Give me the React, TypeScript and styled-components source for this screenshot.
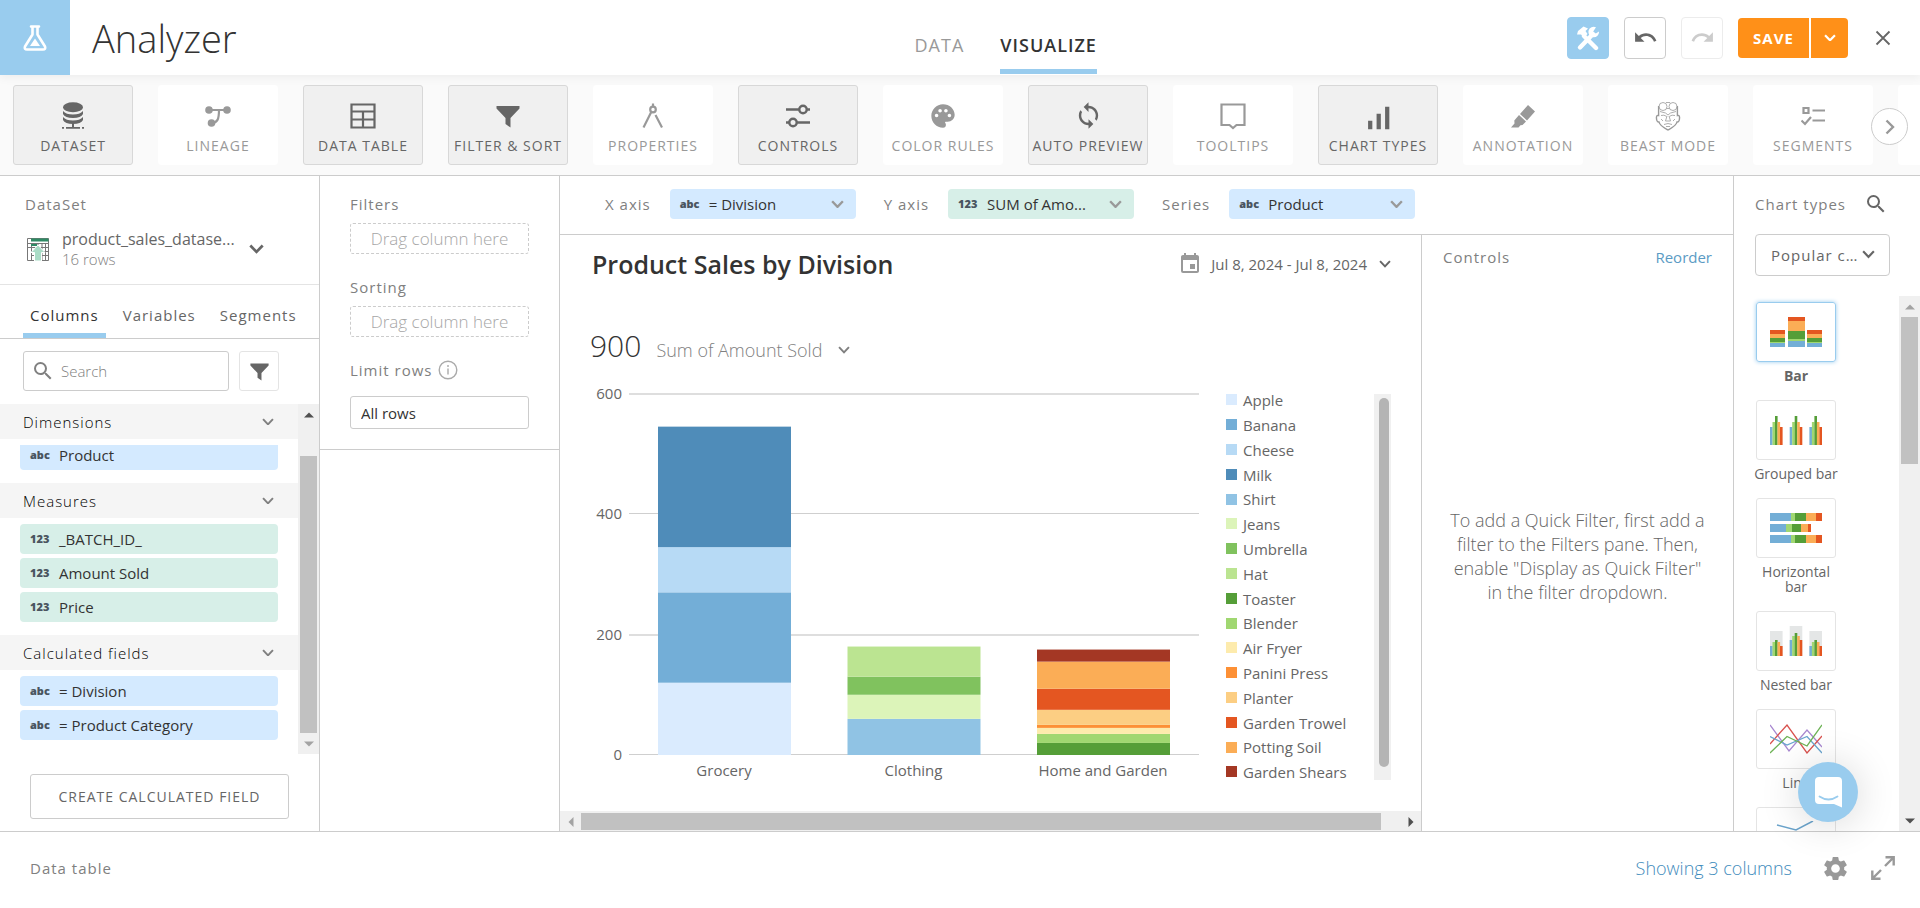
import React from "react";
import styled, { createGlobalStyle, css } from "styled-components";
import {
  MdUndo, MdRedo, MdPalette, MdSync, MdSignalCellularAlt, MdSettings, MdSearch, MdEvent,
} from "react-icons/md";

const c = {
  blue: "#99ccee",
  link: "#5b9bc4",
  orange: "#ff9018",
  line: "#cccccc",
  soft: "#e4e4e4",
  ink: "#333333",
  mid: "#666666",
  label: "#808080",
  pale: "#999999",
  thumb: "#c1c1c1",
  pillBlue: "#d4eaff",
  pillGreen: "#d7efe8",
};

const GlobalStyle = createGlobalStyle`
  *, *::before, *::after { box-sizing: border-box; }
  body { margin: 0; background: #fff; color: ${c.ink}; font-family: "Open Sans", "Noto Sans", sans-serif; font-size: 15px; line-height: 20px; overflow: hidden; }
  button, input, select { font-family: inherit; font-size: inherit; line-height: inherit; color: inherit; }
  button { background: none; border: 0; padding: 0; cursor: pointer; }
  h1, h2, h3, p, ul { margin: 0; padding: 0; font-weight: 400; }
  ul { list-style: none; }
  a { text-decoration: none; }
  svg { display: block; flex: none; }
`;

/* ---------- shell ---------- */
const Page = styled.div`
  height: 100vh;
  display: flex;
  flex-direction: column;
`;

const Header = styled.header`
  position: relative;
  z-index: 1;
  flex: none;
  height: 75px;
  display: grid;
  grid-template-columns: 10fr auto 9fr;
  background: #fff;
  box-shadow: 0 2px 10px rgba(0, 0, 0, 0.06);
`;

const Brand = styled.div`
  display: flex;
  align-items: center;
  gap: 22px;
`;

const BrandMark = styled.div`
  width: 70px;
  height: 75px;
  display: grid;
  place-items: center;
  background: ${c.blue};
`;

const AppTitle = styled.h1`
  font-size: 38px;
  line-height: 48px;
  font-weight: 300;
`;

const MainTabs = styled.nav`
  display: flex;
  gap: 36px;
  padding-bottom: 1px;
`;

const MainTab = styled.button<{ $active?: boolean }>`
  padding-top: 20px;
  font-size: 18px;
  letter-spacing: 1px;
  font-weight: ${(p) => (p.$active ? 600 : 400)};
  color: ${(p) => (p.$active ? c.ink : c.pale)};
  border-bottom: 5px solid ${(p) => (p.$active ? c.blue : "transparent")};
`;

const Actions = styled.div`
  display: flex;
  align-items: center;
  justify-content: flex-end;
  gap: 15px;
  padding-right: 25px;
`;

const SquareButton = styled.button<{ $tone: "filled" | "plain" | "faint" }>`
  width: 42px;
  height: 42px;
  display: grid;
  place-items: center;
  border-radius: 4px;
  border: 1px solid ${(p) => (p.$tone === "filled" ? c.blue : p.$tone === "plain" ? c.line : "#ececec")};
  background: ${(p) => (p.$tone === "filled" ? c.blue : "#fff")};
  color: ${(p) => (p.$tone === "filled" ? "#fff" : p.$tone === "plain" ? c.mid : c.line)};
`;

const SaveGroup = styled.div`
  display: flex;
  gap: 2px;
  height: 40px;
  border-radius: 4px;
  overflow: hidden;
  color: #fff;
  button { background: ${c.orange}; display: grid; place-items: center; }
`;

const SaveButton = styled.button`
  width: 71px;
  font-size: 15px;
  font-weight: 700;
  letter-spacing: 1px;
`;

const SaveMore = styled.button`
  width: 37px;
`;

const CloseButton = styled.button`
  margin-left: 12px;
  padding-right: 4px;
  color: ${c.mid};
`;

/* ---------- toolbar ---------- */
const Toolbar = styled.div`
  position: relative;
  flex: none;
  height: 101px;
  padding: 10px 0 0 13px;
  border-bottom: 1px solid ${c.line};
  background: #fafafa;
  overflow: hidden;
`;

const ToolRow = styled.div`
  display: flex;
  gap: 25px;
`;

const Tool = styled.button<{ $on?: boolean }>`
  flex: none;
  width: 120px;
  height: 80px;
  padding-top: 6px;
  display: flex;
  flex-direction: column;
  align-items: center;
  justify-content: center;
  gap: 5px;
  white-space: nowrap;
  font-size: 14px;
  letter-spacing: 1px;
  border-radius: 3px;
  border: 1px solid ${(p) => (p.$on ? "#d8d8d8" : "#fff")};
  background: ${(p) => (p.$on ? "#f0f0f0" : "#fff")};
  color: ${(p) => (p.$on ? c.mid : c.pale)};
`;

const ToolIcon = styled.span`
  height: 30px;
  display: grid;
  place-items: center;
`;

const NextTools = styled.button`
  position: absolute;
  right: 12px;
  top: 33px;
  width: 37px;
  height: 37px;
  display: grid;
  place-items: center;
  border: 1px solid ${c.line};
  border-radius: 50%;
  background: #fff;
  color: ${c.pale};
`;

/* ---------- workspace ---------- */
const Workspace = styled.div`
  flex: 1;
  min-height: 0;
  display: grid;
  grid-template-columns: 320px 240px minmax(0, 1fr) 187px;
  grid-template-rows: minmax(0, 1fr);
  border-bottom: 1px solid ${c.line};
`;

const panel = css`
  display: flex;
  flex-direction: column;
  min-width: 0;
  min-height: 0;
  overflow: hidden;
`;

const SidePanel = styled.aside`
  ${panel}
  border-right: 1px solid ${c.line};
`;

const PanelLabel = styled.h2`
  font-size: 15px;
  line-height: 20px;
  letter-spacing: 1px;
  color: ${c.label};
`;

const DatasetBox = styled.div`
  flex: none;
  padding: 18px 25px 12px;
  height: 109px;
  border-bottom: 1px solid ${c.soft};
`;

const DatasetRow = styled.button`
  width: 100%;
  margin-top: 15px;
  padding-left: 2px;
  display: flex;
  align-items: center;
  gap: 13px;
  text-align: left;
  color: ${c.mid};
`;

const DatasetText = styled.span`
  width: 174px;
  display: flex;
  flex-direction: column;
`;

const DatasetName = styled.span`
  font-size: 16px;
  white-space: nowrap;
`;

const DatasetRows = styled.span`
  font-weight: 300;
  color: ${c.label};
`;

const SubTabs = styled.div`
  flex: none;
  height: 54px;
  padding: 0 15px 0 23px;
  display: flex;
  gap: 10px;
  border-bottom: 1px solid ${c.line};
`;

const SubTab = styled.button<{ $active?: boolean }>`
  padding: 11px 7px 0;
  letter-spacing: 1px;
  color: ${(p) => (p.$active ? c.ink : c.mid)};
  border-bottom: 5px solid ${(p) => (p.$active ? c.blue : "transparent")};
`;

const SearchRow = styled.div`
  flex: none;
  display: flex;
  gap: 10px;
  padding: 12px 40px 13px 23px;
`;

const SearchBox = styled.label`
  flex: 1;
  min-width: 0;
  height: 40px;
  display: flex;
  align-items: center;
  gap: 6px;
  padding-left: 7px;
  border: 1px solid ${c.line};
  border-radius: 3px;
  color: ${c.label};
  input {
    flex: 1;
    min-width: 0;
    border: 0;
    outline: 0;
    padding: 0;
    background: none;
  }
  input::placeholder { color: ${c.label}; font-weight: 300; opacity: 1; }
`;

const FilterButton = styled.button`
  width: 40px;
  height: 40px;
  display: grid;
  place-items: center;
  border: 1px solid ${c.soft};
  border-radius: 3px;
  color: ${c.mid};
`;

const FieldArea = styled.div`
  height: 350px;
  flex: none;
  display: flex;
`;

const FieldList = styled.div`
  flex: 1;
  min-width: 0;
  overflow: hidden;
`;

const GroupHead = styled.button`
  width: 100%;
  height: 35px;
  padding: 0 24px 0 23px;
  display: flex;
  align-items: center;
  justify-content: space-between;
  font-weight: 300;
  letter-spacing: 1px;
  color: #000;
  background: #f5f5f5;
  > svg { color: ${c.label}; }
`;

const FieldGroup = styled.ul<{ $cut?: boolean }>`
  margin: 6px 20px 13px;
  display: flex;
  flex-direction: column;
  gap: 4px;
  ${(p) => p.$cut && css`
    height: 25px;
    justify-content: flex-end;
    overflow: hidden;
  `}
`;

const Field = styled.li<{ $kind: Kind }>`
  flex: none;
  height: 30px;
  display: flex;
  align-items: center;
  gap: 8px;
  padding: 0 10px;
  border-radius: 4px;
  background: ${(p) => (p.$kind === "abc" ? c.pillBlue : c.pillGreen)};
`;

const KindTag = styled.span`
  width: 21px;
  font-size: 11px;
  line-height: 16px;
  font-weight: 800;
  color: #4a5560;
`;

const CreateButton = styled.button`
  flex: none;
  height: 45px;
  margin: 20px 30px 0;
  border: 1px solid ${c.line};
  border-radius: 3px;
  font-size: 14px;
  letter-spacing: 1px;
  color: ${c.mid};
`;

/* ---------- scrollbars ---------- */
const Track = styled.div<{ $across?: boolean }>`
  flex: none;
  display: flex;
  flex-direction: ${(p) => (p.$across ? "row" : "column")};
  align-items: stretch;
  ${(p) => (p.$across ? "height: 20px; padding: 2px 0 1px;" : "width: 21px; padding: 0 2px;")}
  background: #f0f0f0;
`;

const TrackEnd = styled.span`
  flex: 0 0 21px;
  display: grid;
  place-items: center;
`;

const Thumb = styled.span<{ $grow: number }>`
  flex: ${(p) => p.$grow} 1 0;
  background: ${c.thumb};
`;

const Space = styled.span<{ $grow: number }>`
  flex: ${(p) => p.$grow} 1 0;
`;

/* ---------- filters ---------- */
const FilterBox = styled.div`
  height: 274px;
  padding: 18px 30px 0 30px;
  border-bottom: 1px solid ${c.line};
`;

const DropZone = styled.div`
  height: 31px;
  margin: 9px 0 23px;
  display: grid;
  place-items: center;
  border: 1px dashed ${c.line};
  border-radius: 3px;
  font-size: 17px;
  font-weight: 300;
  color: #a6a6a6;
`;

const LimitLabel = styled.label`
  display: flex;
  align-items: center;
  gap: 6px;
  font-size: 15px;
  letter-spacing: 1px;
  color: ${c.label};
`;

const LimitInput = styled.input`
  width: 100%;
  height: 33px;
  margin-top: 16px;
  padding: 0 10px;
  border: 1px solid ${c.line};
  border-radius: 3px;
`;

/* ---------- chart column ---------- */
const Center = styled.main`
  ${panel}
`;

const AxisBar = styled.div`
  flex: none;
  height: 59px;
  padding: 0 45px 2px;
  display: flex;
  align-items: center;
  gap: 28px;
  border-bottom: 1px solid ${c.line};
`;

const AxisGroup = styled.div`
  display: flex;
  align-items: center;
  gap: 19px;
`;

const AxisPill = styled.button<{ $kind: Kind }>`
  width: 186px;
  height: 30px;
  display: flex;
  align-items: center;
  gap: 8px;
  padding: 0 12px 0 10px;
  text-align: left;
  border-radius: 4px;
  background: ${(p) => (p.$kind === "abc" ? c.pillBlue : c.pillGreen)};
  > svg { margin-left: auto; color: ${c.pale}; }
`;

const Split = styled.div`
  flex: 1;
  min-height: 0;
  display: grid;
  grid-template-columns: minmax(0, 1fr) 312px;
`;

const ChartPane = styled.section`
  ${panel}
`;

const ChartHead = styled.div`
  display: flex;
  align-items: center;
  justify-content: space-between;
  padding: 13px 30px 0 32px;
`;

const ChartTitle = styled.h2`
  font-size: 25px;
  line-height: 32px;
  font-weight: 600;
`;

const DateButton = styled.button`
  display: flex;
  align-items: center;
  gap: 9px;
  color: ${c.mid};
  > svg:first-child { color: ${c.pale}; }
  > svg:last-child { margin-left: 3px; }
`;

const Summary = styled.div`
  display: flex;
  align-items: baseline;
  gap: 15px;
  padding: 46px 0 0 30px;
`;

const SummaryValue = styled.span`
  font-size: 30px;
  line-height: 40px;
  font-weight: 300;
`;

const SummaryName = styled.button`
  display: flex;
  align-items: center;
  gap: 16px;
  font-size: 18px;
  font-weight: 300;
  color: ${c.label};
`;

const ChartBody = styled.div`
  flex: 1;
  min-height: 0;
  display: flex;
  padding: 17px 30px 0 30px;
`;

const ChartSvg = styled.svg`
  width: 609px;
  height: 410px;
  text { font-size: 15px; fill: ${c.mid}; }
`;

const Legend = styled.ul`
  flex: 1;
  padding: 4px 0 0 27px;
`;

const LegendItem = styled.li`
  display: flex;
  align-items: center;
  gap: 6px;
  height: 25px;
  color: ${c.mid};
  &:nth-child(5n) { height: 24px; }
`;

const Swatch = styled.span<{ $fill: string }>`
  width: 11px;
  height: 11px;
  background: ${(p) => p.$fill};
`;

const LegendTrack = styled.div`
  width: 17px;
  height: 386px;
  margin-top: 11px;
  padding: 4px 2px 13px 5px;
  background: #f0f0f0;
  display: flex;
  span { flex: 1; border-radius: 5px; background: #b4b4b4; }
`;

const ControlsPane = styled.section`
  ${panel}
  border-left: 1px solid ${c.line};
`;

const ControlsHead = styled.div`
  display: flex;
  justify-content: space-between;
  padding: 12px 21px 0;
  a { color: ${c.link}; }
`;

const Hint = styled.p`
  flex: 1;
  display: flex;
  align-items: center;
  padding: 14px 25px 0;
  text-align: center;
  font-size: 18px;
  line-height: 24px;
  font-weight: 300;
  color: ${c.mid};
`;

/* ---------- chart types ---------- */
const TypesPanel = styled.aside`
  ${panel}
  border-left: 1px solid ${c.line};
`;

const TypesHead = styled.div`
  display: flex;
  align-items: center;
  justify-content: space-between;
  padding: 16px 32px 0 21px;
`;

const TypeSelect = styled.div`
  position: relative;
  margin: 18px 30px 20px 21px;
  height: 42px;
  color: ${c.mid};
  select {
    appearance: none;
    width: 100%;
    height: 42px;
    padding: 0 24px 0 15px;
    border: 1px solid ${c.line};
    border-radius: 4px;
    background: #fff;
    letter-spacing: 1px;
    text-overflow: ellipsis;
    color: ${c.mid};
  }
  svg { position: absolute; right: 15px; top: 16px; pointer-events: none; }
`;

const TypesArea = styled.div`
  flex: 1;
  min-height: 0;
  display: flex;
`;

const TypeList = styled.ul`
  flex: 1;
  overflow: hidden;
  padding: 6px 0 0 17px;
`;

const TypeItem = styled.li`
  width: 90px;
  margin-bottom: 17px;
`;

const TypeButton = styled.button<{ $on?: boolean }>`
  width: 100%;
  display: flex;
  flex-direction: column;
  align-items: center;
  gap: 6px;
  font-size: 14px;
  line-height: 15px;
  font-weight: ${(p) => (p.$on ? 700 : 400)};
  color: ${c.mid};
`;

const TypeThumb = styled.span<{ $on?: boolean }>`
  width: 80px;
  height: 60px;
  display: grid;
  place-items: center;
  border-radius: 3px;
  border: 1px solid ${(p) => (p.$on ? c.blue : c.soft)};
  ${(p) => p.$on && "box-shadow: 0 0 4px #99ccee;"}
`;

/* ---------- footer ---------- */
const Footer = styled.footer`
  flex: none;
  height: 76px;
  padding: 0 25px 4px 30px;
  display: flex;
  align-items: center;
  gap: 21px;
`;

const FooterLink = styled.a`
  margin-left: auto;
  margin-right: 8px;
  font-size: 18px;
  font-weight: 300;
  color: #3f8cbc;
`;

const IconButton = styled.button<{ $dark?: boolean }>`
  color: ${(p) => (p.$dark ? c.mid : c.pale)};
`;

const ChatButton = styled.button`
  position: fixed;
  right: 62px;
  bottom: 86px;
  z-index: 2;
  width: 60px;
  height: 60px;
  display: grid;
  place-items: center;
  border-radius: 50%;
  background: ${c.blue};
  box-shadow: 0 2px 40px rgba(0, 0, 0, 0.16);
`;

/* ---------- icons ---------- */
const Chevron = ({ w = 12, t = 2 }: { w?: number; t?: number }) => (
  <svg width={w} height={w * 0.66} viewBox="0 0 12 8" fill="none" stroke="currentColor" strokeWidth={t}>
    <path d="M1 1.2 6 6.4 11 1.2" />
  </svg>
);

const Arrow = ({ turn = 0, color = "#a3a3a3" }: { turn?: number; color?: string }) => (
  <svg width="10" height="10" viewBox="0 0 10 10">
    <path d="M0 7.5h10L5 2.5z" fill={color} transform={`rotate(${turn} 5 5)`} />
  </svg>
);

const Flask = () => (
  <svg width="26" height="28" viewBox="0 0 26 28" fill="none" stroke="#fff" strokeWidth="2.6" strokeLinejoin="round" strokeLinecap="round">
    <path d="M9 2.500h8M10.500 3V10.500L3 22.500q-1 3 2 3h16q3 0 2-3L15.500 10.500V3" />
    <path d="M13 14.500l5 7.500H8z" fill="#fff" stroke="none" />
  </svg>
);

const Tools = () => (
  <svg width="24" height="26" viewBox="0 0 24 26">
    <path d="M8 11 20 23" stroke="#fff" strokeWidth="4.400" strokeLinecap="round" />
    <path d="M1 9.500 2 6 7.500 1.500 12 3.500 9.500 6l2 3-3.500 3.500L5 9.500z" fill="#fff" />
    <path d="M4 22.500 16 10" stroke="#fff" strokeWidth="4.400" strokeLinecap="round" />
    <path d="M20 2.200A5.300 5.300 0 1 0 23 6.500L19.800 8.500 17.200 6.500z" fill="#fff" />
  </svg>
);

const CloseIcon = () => (
  <svg width="16" height="16" viewBox="0 0 16 16" fill="none" stroke="currentColor" strokeWidth="1.800">
    <path d="M1.500 1.500l13 13M14.500 1.500l-13 13" />
  </svg>
);

const Funnel = ({ s = 24 }: { s?: number }) => (
  <svg width={s} height={s} viewBox="0 0 24 24" fill="currentColor">
    <path d="M0.500 2h23v2.500L14.500 14v9.500l-5-3.500V14L0.500 4.500z" />
  </svg>
);

const DatabaseIcon = () => (
  <svg width="24" height="28" viewBox="0 0 24 28" fill="currentColor">
    <ellipse cx="12" cy="5.200" rx="10" ry="5" />
    <path d="M2 9q3 3.500 10 3.500T22 9v3q-2 4-10 4T2 12z" />
    <path d="M2 15q3 3.500 10 3.500T22 15v3q-2 4-10 4T2 18z" />
    <path d="M11 21h2v4h6v1.800H5V25h6zM1 25h2v1.800H1zM21 25h2v1.800h-2z" />
  </svg>
);

const LineageIcon = () => (
  <svg width="26" height="28" viewBox="0 0 26 28" fill="currentColor">
    <circle cx="4" cy="8" r="3.800" />
    <circle cx="22" cy="8" r="3.800" />
    <circle cx="6.500" cy="21" r="3.800" />
    <path d="M4 8h18M14 8c0 9-1.500 13-7.500 13" fill="none" stroke="currentColor" strokeWidth="2.200" />
  </svg>
);

const TableIcon = () => (
  <svg width="26" height="28" viewBox="0 0 26 28" fill="none" stroke="currentColor" strokeWidth="2.200">
    <path d="M1.500 2.500h23v23h-23zM1.500 9.500h23M1.500 17.500h23M13 9.500v16" />
  </svg>
);

const CompassIcon = () => (
  <svg width="24" height="28" viewBox="0 0 24 28" fill="none" stroke="currentColor" strokeWidth="2.200">
    <path d="M12 1.500v3M10.500 9.500 2.500 25.500M14.500 13l6.500 12.500" />
    <circle cx="12" cy="7.500" r="2.800" />
  </svg>
);

const SlidersIcon = () => (
  <svg width="26" height="28" viewBox="0 0 26 28" fill="none" stroke="currentColor" strokeWidth="2.400">
    <path d="M1 7.500h13M22 7.500h3M1 20.500h3M12 20.500h13" />
    <circle cx="18" cy="7.500" r="3.700" />
    <circle cx="8" cy="20.500" r="3.700" />
  </svg>
);

const TooltipIcon = () => (
  <svg width="26" height="28" viewBox="0 0 26 28" fill="none" stroke="currentColor" strokeWidth="2.200">
    <path d="M1.500 2.500h23V23h-8L13 26l-3.500-3h-8z" />
  </svg>
);

const MarkerIcon = () => (
  <svg width="26" height="28" viewBox="0 0 26 28" fill="currentColor">
    <path d="M18 3l7 6.500-8 9L10 12zM9 13l7 6.500-3.500 3.500-2 .2L8.500 25.500 1 25.500l3.500-4L4.300 18.500z" />
  </svg>
);

const BeastIcon = () => (
  <svg width="26" height="30" viewBox="0 0 26 30" fill="none" stroke="currentColor" strokeWidth="0.800">
    <circle cx="8" cy="5.500" r="4" />
    <circle cx="18" cy="5.500" r="4" />
    <path d="M11 1.500h4M11.500 7.500h3" />
    <path d="M3.600 5V14.500c-2-.500-2.500 1-2 4s1.800 2.500 2.400 2.500c.500 3.500 4.500 5.500 9 8 4.500-2.500 8.500-4.500 9-8 .600 0 1.900.500 2.400-2.500s0-4.500-2-4V5" strokeWidth="1.400" />
    <path d="M5 10.500l5.500 1.500 2.500 2 2.500-2L21 10.500M6 14.500q3-1 5.500.800M20 14.500q-3-1-5.500.800M12 15l-1.500 5h5L14 15M9 23.500q4-2 8 0M11 25.500h4M6 18l2 2M20 18l-2 2" />
  </svg>
);

const ChecklistIcon = () => (
  <svg width="24" height="28" viewBox="0 0 24 28" fill="none" stroke="currentColor" strokeWidth="2.200">
    <path d="M2.500 6h5v5h-5zM11.500 8.500H24M11.500 18.500H24M0.500 18.500l3.500 3.500 6-7" />
  </svg>
);

const NextIcon = () => (
  <svg width="10" height="16" viewBox="0 0 10 16" fill="none" stroke="currentColor" strokeWidth="2.400">
    <path d="M1.500 1.500 8 8l-6.500 6.500" />
  </svg>
);

const DatasetIcon = () => (
  <svg width="22" height="23" viewBox="0 0 22 23">
    <path d="M.5.500h21v22H.500zM.5 5.500h21M.5 9.500h21M4.500 5v17.500M11 5v17.500M15 5v17.500M18.500 5v17.500M4 13.500h17.500M4 17.500h17.500" fill="none" stroke="#777" />
    <path d="M4 .500h17.500v3H4zM4 6h6v2H4z" fill="#2f8a64" />
    <path d="M11 7 18 14.500h-3.500V23h-7v-8.500H4z" fill="#a9dcc6" stroke="#fff" strokeWidth="1" />
  </svg>
);

const InfoIcon = () => (
  <svg width="20" height="20" viewBox="0 0 20 20" fill="none" stroke="#aaa" strokeWidth="1.400">
    <circle cx="10" cy="10" r="8.800" />
    <path d="M10 8.500v6M10 5v2" />
  </svg>
);

const ExpandIcon = () => (
  <svg width="24" height="24" viewBox="0 0 24 24" fill="none" stroke="currentColor" strokeWidth="2.400">
    <path d="M14.500 1.300h8.200V9.500M22 2l-8 8M9.500 22.700H1.300V14.500M2 22l8-8" />
  </svg>
);

const ChatIcon = () => (
  <svg width="27" height="31" viewBox="0 0 27 31">
    <path d="M4 0h19q4 0 4 4v26.500L19 27H4q-4 0-4-4V4q0-4 4-4z" fill="#fff" />
    <path d="M4.500 19.500q9 6 18 0" fill="none" stroke="#99ccee" strokeWidth="1.800" strokeLinecap="round" />
  </svg>
);

/* ---------- chart type thumbnails ---------- */
const hues = ["#73aed6", "#a0d771", "#559e38", "#fbad56", "#e45621"];

const stacked = [[4, 1, 4, 4, 4], [6, 2, 8, 10, 4], [4, 1, 4, 4, 4]];

const BarThumb = () => (
  <svg width="52" height="30" viewBox="0 0 52 30">
    {stacked.map((col, i) => {
      let y = 30;
      return col.map((h, j) => {
        y -= h;
        return <rect key={`${i}-${j}`} x={[0, 18, 37][i]} y={y} width={i === 1 ? 17 : 15} height={h} fill={hues[j]} />;
      });
    })}
  </svg>
);

const Clusters = ({ back, heights }: { back?: number[]; heights: number[][] }) => (
  <svg width="52" height="30" viewBox="0 0 52 30">
    {heights.map((set, i) => (
      <g key={i}>
        {back && <rect x={i * 19.700} y={30 - back[i]} width="12.600" height={back[i]} fill="#e4e6e6" />}
        {set.map((h, j) => (
          <rect key={j} x={i * 19.700 + j * 2.500} y={30 - h} width="2.600" height={h} fill={hues[j]} />
        ))}
      </g>
    ))}
  </svg>
);

const HorizontalThumb = () => (
  <svg width="52" height="30" viewBox="0 0 52 30">
    {[[21, 4, 11, 10, 6], [16, 6, 9, 7, 3], [21, 4, 11, 10, 6]].map((row, i) => {
      let x = 0;
      return row.map((w, j) => {
        const at = x;
        x += w;
        return <rect key={`${i}-${j}`} x={at} y={i * 11} width={w} height="8" fill={hues[j]} />;
      });
    })}
  </svg>
);

const LineThumb = () => (
  <svg width="52" height="30" viewBox="0 0 52 30" fill="none" strokeWidth="1.300">
    <path d="M0 1 19 27 37 6 52 23" stroke="#a888d0" />
    <path d="M0 20 17 1 37 29 52 12" stroke="#d9534f" />
    <path d="M0 12.500 17 21 37 12.500 52 29" stroke="#6aa5cf" />
    <path d="M0 29 17 12.500 37 22 52 1" stroke="#6db356" />
  </svg>
);

const ComboThumb = () => (
  <svg width="52" height="32" viewBox="0 0 52 32">
    <path d="M7 4 26 9 43 0" fill="none" stroke="#6ba4cc" strokeWidth="1.500" />
    <path d="M0 10h15v3H0zM37 10h15v3H37z" fill="#e86f43" />
    <path d="M0 13h15v8H0zM37 13h15v8H37zM18 16h17v8H18z" fill="#fbad56" />
    <path d="M0 21h15v11H0zM37 21h15v11H37zM18 24h17v8H18z" fill="#559e38" />
  </svg>
);

/* ---------- data ---------- */
type Kind = "abc" | "123";

const tools: { name: string; icon: React.ReactNode; on?: boolean }[] = [
  { name: "DATASET", icon: <DatabaseIcon />, on: true },
  { name: "LINEAGE", icon: <LineageIcon /> },
  { name: "DATA TABLE", icon: <TableIcon />, on: true },
  { name: "FILTER & SORT", icon: <Funnel s={24} />, on: true },
  { name: "PROPERTIES", icon: <CompassIcon /> },
  { name: "CONTROLS", icon: <SlidersIcon />, on: true },
  { name: "COLOR RULES", icon: <MdPalette size={28} /> },
  { name: "AUTO PREVIEW", icon: <MdSync size={29} />, on: true },
  { name: "TOOLTIPS", icon: <TooltipIcon /> },
  { name: "CHART TYPES", icon: <MdSignalCellularAlt size={34} />, on: true },
  { name: "ANNOTATION", icon: <MarkerIcon /> },
  { name: "BEAST MODE", icon: <BeastIcon /> },
  { name: "SEGMENTS", icon: <ChecklistIcon /> },
];

const series: [string, string][] = [
  ["Apple", "#daebfe"], ["Banana", "#73aed7"], ["Cheese", "#b7daf5"], ["Milk", "#4f8cb9"],
  ["Shirt", "#90c3e4"], ["Jeans", "#dcf4b9"], ["Umbrella", "#80c25e"], ["Hat", "#bbe491"],
  ["Toaster", "#559e38"], ["Blender", "#a0d771"], ["Air Fryer", "#fdebad"], ["Panini Press", "#fd9035"],
  ["Planter", "#fcce83"], ["Garden Trowel", "#e45621"], ["Potting Soil", "#fbad56"], ["Garden Shears", "#a43724"],
];

const fills = Object.fromEntries(series);

const divisions: { name: string; parts: [string, number][] }[] = [
  { name: "Grocery", parts: [["Apple", 120], ["Banana", 150], ["Cheese", 75], ["Milk", 200]] },
  { name: "Clothing", parts: [["Shirt", 60], ["Jeans", 40], ["Umbrella", 30], ["Hat", 50]] },
  {
    name: "Home and Garden",
    parts: [["Toaster", 20], ["Blender", 15], ["Air Fryer", 10], ["Panini Press", 5], ["Planter", 25],
      ["Garden Trowel", 35], ["Potting Soil", 45], ["Garden Shears", 20]],
  },
];

const chartTypes: { name: string; thumb: React.ReactNode; on?: boolean }[] = [
  { name: "Bar", thumb: <BarThumb />, on: true },
  { name: "Grouped bar", thumb: <Clusters heights={[[18, 23, 29, 23, 18], [18, 23, 29, 23, 18], [18, 23, 29, 23, 18]]} /> },
  { name: "Horizontal bar", thumb: <HorizontalThumb /> },
  { name: "Nested bar", thumb: <Clusters back={[25, 30, 25]} heights={[[10, 14, 16, 14, 10], [16, 20, 23, 20, 16], [10, 14, 16, 14, 10]]} /> },
  { name: "Line", thumb: <LineThumb /> },
  { name: "Line + bar", thumb: <ComboThumb /> },
];

const base = 372;
const unit = 361.500 / 600;

const Chart = () => (
  <ChartSvg viewBox="0 0 609 410" role="img" aria-label="Amount sold by division">
    {[0, 200, 400, 600].map((v) => {
      const y = Math.round(base - v * unit);
      return (
        <g key={v}>
          <rect x="39" y={y - 1} width="570" height={v === 0 || v === 400 ? 1 : 2} fill={v === 0 || v === 400 ? "#cfcfcf" : "#dedede"} />
          <text x="32" y={y + 5} textAnchor="end">{v}</text>
        </g>
      );
    })}
    {divisions.map((d, i) => {
      let total = 0;
      const x = 68 + i * 189.500;
      return (
        <g key={d.name}>
          {d.parts.map(([name, n]) => {
            total += n;
            return <rect key={name} x={x} y={base - total * unit} width="133" height={n * unit} fill={fills[name]} />;
          })}
          <text x={x + 66} y={base + 21} textAnchor="middle">{d.name}</text>
        </g>
      );
    })}
  </ChartSvg>
);

const Fields = ({ items, cut }: { items: [Kind, string][]; cut?: boolean }) => (
  <FieldGroup $cut={cut}>
    {items.map(([kind, name]) => (
      <Field key={name} $kind={kind}>
        <KindTag>{kind}</KindTag>
        {name}
      </Field>
    ))}
  </FieldGroup>
);

const Axis = ({ label, kind, value }: { label: string; kind: Kind; value: string }) => (
  <AxisGroup>
    <PanelLabel>{label}</PanelLabel>
    <AxisPill $kind={kind}>
      <KindTag>{kind}</KindTag>
      {value}
      <Chevron w={13} t={2.200} />
    </AxisPill>
  </AxisGroup>
);

export default function App() {
  return (
    <Page>
      <GlobalStyle />
      <Header>
        <Brand>
          <BrandMark><Flask /></BrandMark>
          <AppTitle>Analyzer</AppTitle>
        </Brand>
        <MainTabs>
          <MainTab>DATA</MainTab>
          <MainTab $active>VISUALIZE</MainTab>
        </MainTabs>
        <Actions>
          <SquareButton $tone="filled" aria-label="Tools"><Tools /></SquareButton>
          <SquareButton $tone="plain" aria-label="Undo"><MdUndo size={25} /></SquareButton>
          <SquareButton $tone="faint" aria-label="Redo"><MdRedo size={25} /></SquareButton>
          <SaveGroup>
            <SaveButton>SAVE</SaveButton>
            <SaveMore aria-label="More save options"><Chevron w={12} t={2.200} /></SaveMore>
          </SaveGroup>
          <CloseButton aria-label="Close"><CloseIcon /></CloseButton>
        </Actions>
      </Header>

      <Toolbar>
        <ToolRow>
          {tools.map((t) => (
            <Tool key={t.name} $on={t.on}>
              <ToolIcon>{t.icon}</ToolIcon>
              {t.name}
            </Tool>
          ))}
          <Tool aria-label="More tools" />
        </ToolRow>
        <NextTools aria-label="Next tools"><NextIcon /></NextTools>
      </Toolbar>

      <Workspace>
        <SidePanel>
          <DatasetBox>
            <PanelLabel>DataSet</PanelLabel>
            <DatasetRow>
              <DatasetIcon />
              <DatasetText>
                <DatasetName>product_sales_datase...</DatasetName>
                <DatasetRows>16 rows</DatasetRows>
              </DatasetText>
              <Chevron w={15} t={2.200} />
            </DatasetRow>
          </DatasetBox>
          <SubTabs>
            <SubTab $active>Columns</SubTab>
            <SubTab>Variables</SubTab>
            <SubTab>Segments</SubTab>
          </SubTabs>
          <SearchRow>
            <SearchBox>
              <MdSearch size={24} />
              <input type="text" placeholder="Search" aria-label="Search columns" />
            </SearchBox>
            <FilterButton aria-label="Filter columns"><Funnel s={19} /></FilterButton>
          </SearchRow>
          <FieldArea>
            <FieldList>
              <GroupHead>Dimensions<Chevron /></GroupHead>
              <Fields cut items={[["abc", "Product"]]} />
              <GroupHead>Measures<Chevron /></GroupHead>
              <Fields items={[["123", "_BATCH_ID_"], ["123", "Amount Sold"], ["123", "Price"]]} />
              <GroupHead>Calculated fields<Chevron /></GroupHead>
              <Fields items={[["abc", "= Division"], ["abc", "= Product Category"]]} />
            </FieldList>
            <Track aria-hidden>
              <TrackEnd><Arrow color="#505050" /></TrackEnd>
              <Space $grow={31} />
              <Thumb $grow={277} />
              <TrackEnd><Arrow turn={180} /></TrackEnd>
            </Track>
          </FieldArea>
          <CreateButton>CREATE CALCULATED FIELD</CreateButton>
        </SidePanel>

        <SidePanel>
          <FilterBox>
            <PanelLabel>Filters</PanelLabel>
            <DropZone>Drag column here</DropZone>
            <PanelLabel>Sorting</PanelLabel>
            <DropZone>Drag column here</DropZone>
            <LimitLabel htmlFor="limit">Limit rows <InfoIcon /></LimitLabel>
            <LimitInput id="limit" type="text" defaultValue="All rows" />
          </FilterBox>
        </SidePanel>

        <Center>
          <AxisBar>
            <Axis label="X axis" kind="abc" value="= Division" />
            <Axis label="Y axis" kind="123" value="SUM of Amo..." />
            <Axis label="Series" kind="abc" value="Product" />
          </AxisBar>
          <Split>
            <ChartPane>
              <ChartHead>
                <ChartTitle>Product Sales by Division</ChartTitle>
                <DateButton>
                  <MdEvent size={24} />
                  Jul 8, 2024 - Jul 8, 2024
                  <Chevron />
                </DateButton>
              </ChartHead>
              <Summary>
                <SummaryValue>900</SummaryValue>
                <SummaryName>Sum of Amount Sold <Chevron /></SummaryName>
              </Summary>
              <ChartBody>
                <Chart />
                <Legend>
                  {series.map(([name, fill]) => (
                    <LegendItem key={name}><Swatch $fill={fill} />{name}</LegendItem>
                  ))}
                </Legend>
                <LegendTrack aria-hidden><span /></LegendTrack>
              </ChartBody>
              <Track $across aria-hidden>
                <TrackEnd><Arrow turn={-90} /></TrackEnd>
                <Thumb $grow={800} />
                <Space $grow={19} />
                <TrackEnd><Arrow turn={90} color="#505050" /></TrackEnd>
              </Track>
            </ChartPane>
            <ControlsPane>
              <ControlsHead>
                <PanelLabel>Controls</PanelLabel>
                <a href="#reorder">Reorder</a>
              </ControlsHead>
              <Hint>To add a Quick Filter, first add a filter to the Filters pane. Then, enable "Display as Quick Filter" in the filter dropdown.</Hint>
            </ControlsPane>
          </Split>
        </Center>

        <TypesPanel>
          <TypesHead>
            <PanelLabel>Chart types</PanelLabel>
            <IconButton $dark aria-label="Search chart types"><MdSearch size={24} /></IconButton>
          </TypesHead>
          <TypeSelect>
            <select aria-label="Chart category" defaultValue="popular">
              <option value="popular">Popular charts</option>
            </select>
            <Chevron w={13} />
          </TypeSelect>
          <TypesArea>
            <TypeList>
              {chartTypes.map((t) => (
                <TypeItem key={t.name}>
                  <TypeButton $on={t.on}>
                    <TypeThumb $on={t.on}>{t.thumb}</TypeThumb>
                    {t.name}
                  </TypeButton>
                </TypeItem>
              ))}
            </TypeList>
            <Track aria-hidden>
              <TrackEnd><Arrow /></TrackEnd>
              <Thumb $grow={147} />
              <Space $grow={346} />
              <TrackEnd><Arrow turn={180} color="#505050" /></TrackEnd>
            </Track>
          </TypesArea>
        </TypesPanel>
      </Workspace>

      <Footer>
        <PanelLabel>Data table</PanelLabel>
        <FooterLink href="#columns">Showing 3 columns</FooterLink>
        <IconButton aria-label="Settings"><MdSettings size={29} /></IconButton>
        <IconButton aria-label="Expand"><ExpandIcon /></IconButton>
      </Footer>

      <ChatButton aria-label="Open chat"><ChatIcon /></ChatButton>
    </Page>
  );
}
